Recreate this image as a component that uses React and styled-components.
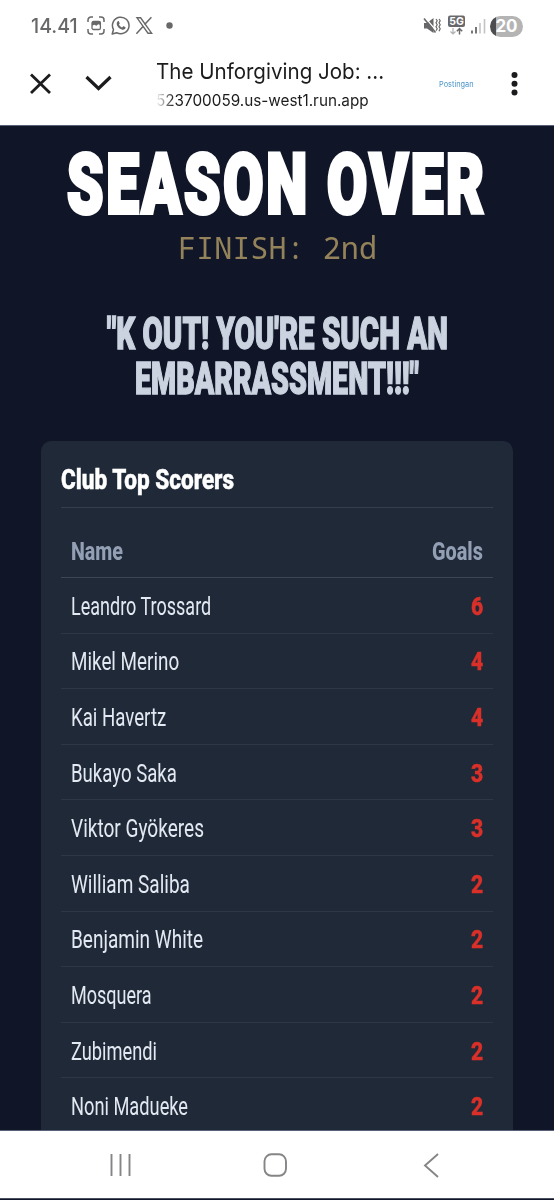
import React, { useLayoutEffect, useRef, useState } from "react";
import styled, { createGlobalStyle } from "styled-components";

const Color = {
  Page: "#101627",
  Card: "#202938",
  Line: "#343e4e",
  White: "#ffffff",
  Quote: "#cbd3e0",
  Muted: "#939fb4",
  Name: "#e3e9f2",
  Red: "#d93029",
  Gold: "#94835a",
  Ink: "#1c1c1e",
  Status: "#68686a",
  Nav: "#858587",
};

const scorers = [
  { name: "Leandro Trossard", goals: 6, width: 140 },
  { name: "Mikel Merino", goals: 4, width: 108 },
  { name: "Kai Havertz", goals: 4, width: 95 },
  { name: "Bukayo Saka", goals: 3, width: 106 },
  { name: "Viktor Gyökeres", goals: 3, width: 133 },
  { name: "William Saliba", goals: 2, width: 119 },
  { name: "Benjamin White", goals: 2, width: 132 },
  { name: "Mosquera", goals: 2, width: 81 },
  { name: "Zubimendi", goals: 2, width: 86 },
  { name: "Noni Madueke", goals: 2, width: 117 },
];

const GlobalStyle = createGlobalStyle`
  * {
    box-sizing: border-box;
  }
  body {
    margin: 0;
    background: ${Color.Page};
    font-family: Roboto, "Liberation Sans", sans-serif;
  }
`;

// styled elements
const Screen = styled.div`
  width: 554px;
  height: 1200px;
  display: flex;
  flex-direction: column;
  overflow: hidden;
  background: ${Color.Page};
`;
const StatusBar = styled.div`
  height: 52px;
  flex: none;
  padding: 0 31px;
  display: flex;
  align-items: center;
  justify-content: space-between;
  background: ${Color.White};
  color: ${Color.Status};
`;
const StatusGroup = styled.div`
  display: flex;
  align-items: center;
  svg {
    display: block;
  }
`;
const Clock = styled.div`
  font-family: Inter, sans-serif;
  font-size: 20px;
  font-weight: 500;
  line-height: 24px;
  margin-right: 9px;
`;
const Battery = styled.div`
  width: 33px;
  height: 21px;
  margin-left: 4px;
  margin-right: 0;
  border-radius: 11px;
  background: linear-gradient(90deg, #4d4d4f 6px, #b4b4b4 6px);
  color: ${Color.White};
  font-family: Inter, sans-serif;
  font-size: 17px;
  font-weight: 700;
  line-height: 21px;
  text-align: center;
`;
const BrowserBar = styled.div`
  height: 73px;
  flex: none;
  padding: 0 36.5px 0 29px;
  display: flex;
  align-items: flex-start;
  background: ${Color.White};
  color: ${Color.Ink};
  svg {
    display: block;
    flex: none;
    margin-top: 20px;
  }
`;
const ChevronDown = styled.svg`
  margin-left: 33px;
`;
const PageInfo = styled.div`
  width: 240px;
  margin-left: 43px;
  padding-top: 5px;
  font-family: Inter, sans-serif;
`;
const PageTitle = styled.div`
  font-size: 22px;
  line-height: 29px;
`;
const PageUrl = styled.div`
  font-size: 16px;
  line-height: 28px;
  width: 214px;
  mask-image: linear-gradient(90deg, transparent, #000 18px);
`;
const Posting = styled.div`
  margin: 27px 37px 0 auto;
  font-family: Inter, sans-serif;
  font-size: 8px;
  line-height: 10px;
  color: #4a96c8;
`;
const Content = styled.main`
  flex: 1;
  min-height: 0;
  overflow: hidden;
  border-top: 1px solid #596079;
  border-bottom: 1px solid #596079;
  padding: 0 41px;
`;
const Title = styled.h1`
  margin: 8px 0 0;
  font-size: 84px;
  font-weight: 900;
  line-height: 102px;
  letter-spacing: 4px;
  text-align: center;
  color: ${Color.White};
`;
const Finish = styled.div`
  margin-top: -8px;
  font-family: "Noto Sans Mono", "DejaVu Sans Mono", monospace;
  font-size: 30px;
  line-height: 39px;
  text-align: center;
  color: ${Color.Gold};
`;
const Quote = styled.blockquote`
  margin: 45px 0 39px;
  display: flex;
  flex-direction: column;
  align-items: center;
  font-size: 43.5px;
  font-weight: 900;
  line-height: 45px;
  color: ${Color.Quote};
`;
const Card = styled.section`
  padding: 20px 20px 0;
  height: 800px;
  border-radius: 10px;
  background: ${Color.Card};
`;
const CardTitle = styled.h2`
  margin: 0;
  height: 45.5px;
  font-size: 27.5px;
  font-weight: 800;
  line-height: 37px;
  color: ${Color.White};
`;
const Table = styled.div`
  border-top: 1px solid ${Color.Line};
  padding-top: 15.5px;
`;
const Row = styled.div`
  height: ${(props) => (props.$head ? "55px" : "55.6px")};
  padding: 0 10px;
  display: flex;
  align-items: center;
  justify-content: space-between;
  border-bottom: 1px solid ${(props) => (props.$head ? "#3b4554" : "#2e3747")};
  font-size: 26.5px;
  font-weight: ${(props) => (props.$head ? 800 : 400)};
  color: ${(props) => (props.$head ? Color.Muted : Color.Name)};
`;
const Goals = styled.div`
  font-weight: 800;
  color: ${Color.Red};
`;
const NavBar = styled.nav`
  height: 68px;
  flex: none;
  margin-bottom: 1px;
  padding: 1px 114px 0 109px;
  display: flex;
  align-items: center;
  border-bottom: 1px solid #4a5163;
  background: ${Color.White};
  color: ${Color.Nav};
`;
const HomeIcon = styled.svg`
  margin-left: 131px;
  margin-right: auto;
`;
const FitBox = styled.span`
  display: inline-block;
  vertical-align: top;
  white-space: nowrap;
  width: ${(props) => props.$width}px;
`;
const FitText = styled.span`
  display: inline-block;
  transform-origin: 0 50%;
  -webkit-text-stroke: ${(props) => props.$stroke || 0}px currentColor;
`;

// squeezes a line of text to a given width
function Fit({ width, stroke, children }) {
  const ref = useRef(null);
  const [scale, setScale] = useState(1);

  useLayoutEffect(() => {
    setScale(width / ref.current.offsetWidth);
  }, [width, children]);

  return (
    <FitBox $width={width}>
      <FitText
        ref={ref}
        $stroke={stroke}
        style={{ transform: `scaleX(${scale})` }}
      >
        {children}
      </FitText>
    </FitBox>
  );
}

function StatusIcons() {
  return (
    <svg width="88" height="20" viewBox="0 0 88 20" fill="none" stroke="currentColor">
      <path
        d="M1 6V4a3 3 0 0 1 3-3h2M12 1h2a3 3 0 0 1 3 3v2M17 13v2a3 3 0 0 1-3 3h-2M6 18H4a3 3 0 0 1-3-3v-2"
        strokeWidth="1.5"
      />
      <rect x="5" y="5.5" width="8.4" height="8" rx="1.6" strokeWidth="1.3" />
      <path d="M5 5.5h8.4V9l-2.2-.8-1.800 1.600-2-1L5 9.800z" fill="currentColor" stroke="none" />
      <path
        d="M25.200 18l1.300-4.500a8.300 8.300 0 1 1 3.200 3.200z"
        strokeWidth="1.5"
        strokeLinejoin="round"
      />
      <path
        d="M30.600 5.400c.5-.4 1-.4 1.300.1l.8 1.700c.1.500-.5 1-.8 1.400.7 1.400 1.800 2.400 3.200 2.900l1.100-1.200c.4-.3 2 .6 2.300.9.3.6-.3 1.900-1.400 2.300-2.400.8-6.600-1.900-7.300-5.100-.2-1.200.1-2.400.8-3z"
        fill="currentColor"
        stroke="none"
      />
      <path d="M50 1.800h3.600l11 15.400H61z" strokeWidth="1.4" />
      <path d="M64.400 1.200l-6.800 7.300M56 10.500l-6.600 7.300" strokeWidth="1.5" />
      <circle cx="82.500" cy="9.500" r="3.200" fill="currentColor" stroke="none" />
    </svg>
  );
}

function SignalIcons() {
  return (
    <svg width="63" height="22" viewBox="0 0 63 22" fill="none" stroke="currentColor">
      <path d="M1 8h3L10.500 3v15L4 13.500H1z" fill="currentColor" stroke="none" />
      <path d="M2.500 3l10.500 12.500" stroke="#fff" strokeWidth="1.200" />
      <path d="M1 3.500l11.500 14" strokeWidth="1.600" />
      <path
        d="M13 4l1.200 1.700L13 7.700l1.200 2L13 11.700l1.200 2-1.200 2M16 4l1.200 1.700L16 7.700l1.200 2-1.200 2 1.200 2-1.200 2.500"
        strokeWidth="1.200"
      />
      <rect x="25" y="0.500" width="17" height="11.500" rx="2" fill="currentColor" stroke="none" />
      <text
        x="33.500"
        y="9.900"
        textAnchor="middle"
        fontFamily="Inter, sans-serif"
        fontSize="10.500"
        fontWeight="700"
        fill="#fff"
        stroke="none"
      >
        5G
      </text>
      <path d="M30 13v6M27.500 16.500l2.500 2.500 2.500-2.500" stroke="#b0b0b0" strokeWidth="1.200" />
      <path d="M36.500 19.500V14M33.800 16.200l2.700-2.700 2.700 2.700" strokeWidth="1.500" />
      <path d="M49 15.500v3M53 12v6.500" strokeWidth="1.800" />
      <path d="M57 8v10.500M61.500 4v14.500" stroke="#c4c4c4" strokeWidth="1.600" />
    </svg>
  );
}

function App() {
  return (
    <>
      <GlobalStyle />
      <Screen>
        <StatusBar>
          <StatusGroup>
            <Clock>
              <Fit width={47}>14.41</Fit>
            </Clock>
            <StatusIcons />
          </StatusGroup>
          <StatusGroup>
            <SignalIcons />
            <Battery>20</Battery>
          </StatusGroup>
        </StatusBar>

        <BrowserBar>
          <svg width="23" height="23" viewBox="0 0 23 23" fill="none" stroke="currentColor" strokeWidth="2.8">
            <path d="M2 2.500l19 18.500M21 2.500L2 21" />
          </svg>
          <ChevronDown width="28" height="23" viewBox="0 0 28 23" fill="none" stroke="currentColor" strokeWidth="3.200">
            <path d="M1.500 5l12 11.500L25.500 5" />
          </ChevronDown>
          <PageInfo>
            <PageTitle>
              <Fit width={228}>The Unforgiving Job: ...</Fit>
            </PageTitle>
            <PageUrl>
              <Fit width={213}>523700059.us-west1.run.app</Fit>
            </PageUrl>
          </PageInfo>
          <Posting>
            <Fit width={35}>Postingan</Fit>
          </Posting>
          <svg width="7" height="24" viewBox="0 0 7 24" fill="currentColor">
            <circle cx="3.500" cy="3" r="3" />
            <circle cx="3.500" cy="11.800" r="3" />
            <circle cx="3.500" cy="20.500" r="3" />
          </svg>
        </BrowserBar>

        <Content>
          <Title>
            <Fit width={420} stroke={4}>SEASON OVER</Fit>
          </Title>
          <Finish>
            <Fit width={199}>FINISH: 2nd</Fit>
          </Finish>
          <Quote>
            <Fit width={341} stroke={1.4}>"K OUT! YOU'RE SUCH AN</Fit>
            <Fit width={284} stroke={1.4}>EMBARRASSMENT!!!"</Fit>
          </Quote>
          <Card>
            <CardTitle>
              <Fit width={173} stroke={0.5}>Club Top Scorers</Fit>
            </CardTitle>
            <Table>
              <Row $head>
                <Fit width={52}>Name</Fit>
                <Fit width={51}>Goals</Fit>
              </Row>
              {scorers.map((e, i) => {
                return (
                  <Row key={i}>
                    <Fit width={e.width}>{e.name}</Fit>
                    <Goals>
                      <Fit width={12} stroke={0.5}>{e.goals}</Fit>
                    </Goals>
                  </Row>
                );
              })}
            </Table>
          </Card>
        </Content>

        <NavBar>
          <svg width="23" height="24" viewBox="0 0 23 24" fill="none" stroke="currentColor" strokeWidth="1.900">
            <path d="M2.500 1v22M11.500 1v22M20.500 1v22" />
          </svg>
          <HomeIcon width="24" height="24" viewBox="0 0 24 24" fill="none" stroke="currentColor" strokeWidth="1.900">
            <rect x="1.500" y="1.300" width="21.500" height="21.500" rx="7" />
          </HomeIcon>
          <svg width="17" height="25" viewBox="0 0 17 25" fill="none" stroke="currentColor" strokeWidth="1.900">
            <path d="M15 1L2 12.500 15 24" />
          </svg>
        </NavBar>
      </Screen>
    </>
  );
}

export default App;
